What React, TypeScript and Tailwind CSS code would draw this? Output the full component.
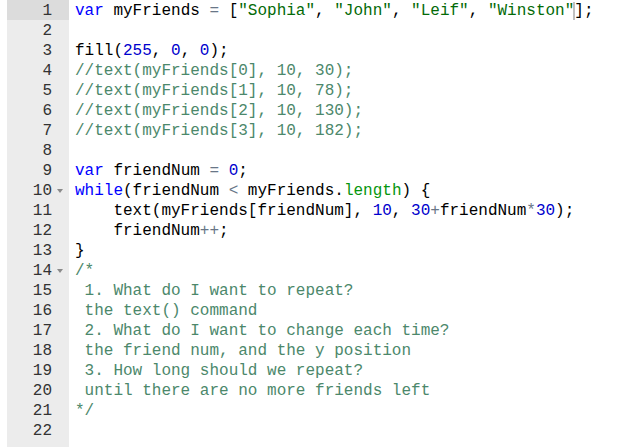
import React from 'react';

type Tok = [string, string?];

const kw = 'text-[#0000ff]';
const str = 'text-[#036a07]';
const num = 'text-[#0000cd]';
const cm = 'text-[#4c886b]';
const op = 'text-[#687687]';
const sup = 'text-[#06960e]';

const lines: (Tok[] | 'cursor1')[] = [
  'cursor1',
  [],
  [['fill('], ['255', num], [', '], ['0', num], [', '], ['0', num], [');']],
  [['//text(myFriends[0], 10, 30);', cm]],
  [['//text(myFriends[1], 10, 78);', cm]],
  [['//text(myFriends[2], 10, 130);', cm]],
  [['//text(myFriends[3], 10, 182);', cm]],
  [],
  [['var', kw], [' friendNum '], ['=', op], [' '], ['0', num], [';']],
  [['while', kw], ['(friendNum '], ['<', op], [' myFriends.'], ['length', sup], [') {']],
  [['    text(myFriends[friendNum], '], ['10', num], [', '], ['30', num], ['+', op], ['friendNum'], ['*', op], ['30', num], [');']],
  [['    friendNum'], ['++', op], [';']],
  [['}']],
  [['/*', cm]],
  [[' 1. What do I want to repeat?', cm]],
  [[' the text() command', cm]],
  [[' 2. What do I want to change each time?', cm]],
  [[' the friend num, and the y position', cm]],
  [[' 3. How long should we repeat?', cm]],
  [[' until there are no more friends left', cm]],
  [['*/', cm]],
  [],
];

const folds = [10, 14];

export default function App() {
  return (
    <div
      className="flex h-[447px] w-[642px] overflow-hidden bg-white text-[16px] leading-[18px] text-black"
      style={{ fontFamily: '"Liberation Mono", "DejaVu Sans Mono", monospace' }}
    >
      <div className="w-[7px] shrink-0" />

      {/* gutter */}
      <div className="w-[62px] shrink-0 bg-[#ececec] text-[#333]">
        {lines.map((_, i) => (
          <div
            key={i}
            className={`relative h-[20px] pt-[2px] pr-[17px] text-right ${i === 0 ? 'bg-[#dcdcdc]' : ''}`}
          >
            {i + 1}
            {folds.includes(i + 1) && (
              <svg className="absolute right-[6px] top-[9px]" width="6" height="4" viewBox="0 0 6 4">
                <path d="M0 0 L6 0 L3 4 Z" fill="#8a8a8a" />
              </svg>
            )}
          </div>
        ))}
      </div>

      {/* code */}
      <div className="flex-1 pl-[6px]">
        {lines.map((line, i) => (
          <div key={i} className="h-[20px] pt-[2px] whitespace-pre">
            {line === 'cursor1' ? (
              <>
                <span className={kw}>var</span> myFriends <span className={op}>=</span> [
                <span className={str}>"Sophia"</span>, <span className={str}>"John"</span>,{' '}
                <span className={str}>"Leif"</span>, <span className={str}>"Winston"</span>
                <span className="relative">
                  <span className="absolute left-[-1px] top-0 h-[18px] w-[2px] bg-[#c0c0c0]" />
                  ]
                </span>
                ;
              </>
            ) : (
              line.map((t, j) => (
                <span key={j} className={t[1]}>
                  {t[0]}
                </span>
              ))
            )}
          </div>
        ))}
      </div>
    </div>
  );
}
